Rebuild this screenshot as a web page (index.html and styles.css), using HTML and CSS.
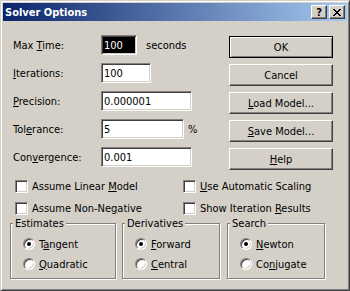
FILE: index.html
```html
<!DOCTYPE html>
<html lang="en">
<head>
  <meta charset="UTF-8">
  <title>Solver Options</title>
  <link rel="stylesheet" href="styles.css">
</head>
<body>
  <div class="dialog">
    <div class="titlebar">
      <span class="title">Solver Options</span>
      <div class="title-buttons">
        <button class="tbtn help-btn">?</button>
        <button class="tbtn close-btn">
          <svg width="8" height="7" viewBox="0 0 8 7" shape-rendering="crispEdges">
            <path d="M0 0h2v1H0zM6 0h2v1H6zM1 1h2v1H1zM5 1h2v1H5zM2 2h4v1H2zM3 3h2v1H3zM2 4h4v1H2zM1 5h2v1H1zM5 5h2v1H5zM0 6h2v1H0zM6 6h2v1H6z" fill="#000"/>
          </svg>
        </button>
      </div>
    </div>

    <div class="content">
      <div class="top">
        <div class="fields">
          <div class="field">
            <label>Max <u>T</u>ime:</label>
            <input class="textbox selected w-time" type="text" value="100">
            <span class="suffix">seconds</span>
          </div>
          <div class="field">
            <label><u>I</u>terations:</label>
            <input class="textbox w-iter" type="text" value="100">
          </div>
          <div class="field">
            <label><u>P</u>recision:</label>
            <input class="textbox w-prec" type="text" value="0.000001">
          </div>
          <div class="field">
            <label>Tol<u>e</u>rance:</label>
            <input class="textbox w-tol" type="text" value="5">
            <span class="suffix pct">%</span>
          </div>
          <div class="field">
            <label>Con<u>v</u>ergence:</label>
            <input class="textbox w-prec" type="text" value="0.001">
          </div>
        </div>

        <div class="buttons">
          <button class="btn default">OK</button>
          <button class="btn">Cancel</button>
          <button class="btn"><u>L</u>oad Model...</button>
          <button class="btn"><u>S</u>ave Model...</button>
          <button class="btn"><u>H</u>elp</button>
        </div>
      </div>

      <div class="options">
        <div class="check"><span class="checkbox"></span><span>Assume Linear <u>M</u>odel</span></div>
        <div class="check"><span class="checkbox"></span><span><u>U</u>se Automatic Scaling</span></div>
        <div class="check"><span class="checkbox"></span><span>Assume Non-Ne<u>g</u>ative</span></div>
        <div class="check"><span class="checkbox"></span><span>Show Iteration <u>R</u>esults</span></div>
      </div>

      <div class="groups">
        <fieldset class="group estimates">
          <legend>Estimates</legend>
          <div class="group-body">
            <div class="radio-row"><span class="radio checked"></span><span>T<u>a</u>ngent</span></div>
            <div class="radio-row"><span class="radio"></span><span><u>Q</u>uadratic</span></div>
          </div>
        </fieldset>
        <fieldset class="group derivatives">
          <legend>Derivatives</legend>
          <div class="group-body">
            <div class="radio-row"><span class="radio checked"></span><span><u>F</u>orward</span></div>
            <div class="radio-row"><span class="radio"></span><span><u>C</u>entral</span></div>
          </div>
        </fieldset>
        <fieldset class="group search">
          <legend>Search</legend>
          <div class="group-body">
            <div class="radio-row"><span class="radio checked"></span><span><u>N</u>ewton</span></div>
            <div class="radio-row"><span class="radio"></span><span>Co<u>n</u>jugate</span></div>
          </div>
        </fieldset>
      </div>
    </div>
  </div>
</body>
</html>
```

FILE: styles.css
```css
* {
  box-sizing: border-box;
}

body {
  margin: 0;
  background-color: #d4d0c8;
  font-family: "DejaVu Sans Condensed", "DejaVu Sans", sans-serif;
  font-stretch: condensed;
  font-size: 11px;
  color: #000;
}

u {
  text-decoration: underline;
  text-underline-offset: 1px;
}

/* window frame */
.dialog {
  width: 350px;
  height: 291px;
  background-color: #d4d0c8;
  border: 1px solid;
  border-color: #d4d0c8 #404040 #404040 #d4d0c8;
  box-shadow: inset 1px 1px #fff, inset -1px -1px #808080;
  padding: 2px;
}

.titlebar {
  height: 18px;
  display: flex;
  align-items: center;
  padding: 0 2px;
  background: linear-gradient(to right, #0a246a, #a6caf0);
}

.title {
  color: #fff;
  font-weight: bold;
  font-size: 11px;
}

.title-buttons {
  margin-left: auto;
  display: flex;
  gap: 2px;
}

.tbtn {
  width: 16px;
  height: 14px;
  padding: 0;
  display: flex;
  align-items: center;
  justify-content: center;
  background-color: #d4d0c8;
  border: 1px solid;
  border-color: #fff #404040 #404040 #fff;
  box-shadow: inset -1px -1px #808080;
  font-family: inherit;
  font-size: 11px;
  font-weight: bold;
  line-height: 1;
  color: #000;
}

/* dialog content */
.content {
  padding: 14px 14px 0 7px;
}

.top {
  display: flex;
  justify-content: space-between;
}

.fields {
  display: flex;
  flex-direction: column;
  gap: 8px;
  margin-left: 3px;
}

.field {
  display: flex;
  align-items: center;
  height: 20px;
}

.field label {
  width: 88px;
}

.textbox {
  height: 20px;
  margin: 0;
  padding: 0 0 0 2px;
  border: 1px solid;
  border-color: #808080 #fff #fff #808080;
  box-shadow: inset 1px 1px #404040, inset -1px -1px #d4d0c8;
  background-color: #fff;
  font-family: inherit;
  font-stretch: condensed;
  font-size: 11px;
  color: #000;
  outline: none;
}

.textbox.selected {
  background-color: #000;
  color: #fff;
}

.w-time { width: 36px; }
.w-iter { width: 50px; }
.w-prec { width: 91px; }
.w-tol { width: 83px; }

.suffix {
  margin-left: 9px;
}

.suffix.pct {
  margin-left: 4px;
}

.buttons {
  display: flex;
  flex-direction: column;
  gap: 6px;
  margin-top: 1px;
  width: 104px;
}

.btn {
  height: 22px;
  padding: 0;
  background-color: #d4d0c8;
  border: 1px solid;
  border-color: #fff #404040 #404040 #fff;
  box-shadow: inset -1px -1px #808080;
  font-family: inherit;
  font-stretch: condensed;
  font-size: 11px;
  color: #000;
}

.btn.default {
  border-color: #000;
  box-shadow: inset 1px 1px #fff, inset -1px -1px #808080;
}

/* check boxes */
.options {
  display: grid;
  grid-template-columns: 168px 1fr;
  row-gap: 9px;
  margin: 10px 0 0 5px;
}

.check {
  display: flex;
  align-items: center;
  height: 13px;
  line-height: 13px;
}

.checkbox {
  width: 13px;
  height: 13px;
  margin-right: 4px;
  background-color: #fff;
  border: 1px solid;
  border-color: #808080 #fff #fff #808080;
  box-shadow: inset 1px 1px #404040, inset -1px -1px #d4d0c8;
}

/* group boxes */
.groups {
  display: flex;
  gap: 6px;
  margin-top: 2px;
}

.group {
  margin: 0;
  padding: 0;
  border: 1px solid #808080;
  box-shadow: 1px 1px 0 #fff, inset 1px 1px 0 #fff;
  height: 62px;
}

.group legend {
  margin-left: 2px;
  padding: 0 2px;
  line-height: 13px;
  background-color: #d4d0c8;
}

.estimates { width: 106px; }
.derivatives { width: 98px; }
.search { width: 98px; margin-left: 1px; }

.group-body {
  padding: 4px 0 0 12px;
}

.radio-row {
  display: flex;
  align-items: center;
  height: 20px;
}

.radio {
  position: relative;
  width: 12px;
  height: 12px;
  margin-right: 4px;
  border-radius: 50%;
  background-color: #fff;
  border: 1px solid;
  border-color: #808080 #fff #fff #808080;
  box-shadow: inset 1px 1px #404040, inset -1px -1px #d4d0c8;
}

.radio.checked::after {
  content: "";
  position: absolute;
  left: 3px;
  top: 3px;
  width: 4px;
  height: 4px;
  border-radius: 50%;
  background-color: #000;
}
```
